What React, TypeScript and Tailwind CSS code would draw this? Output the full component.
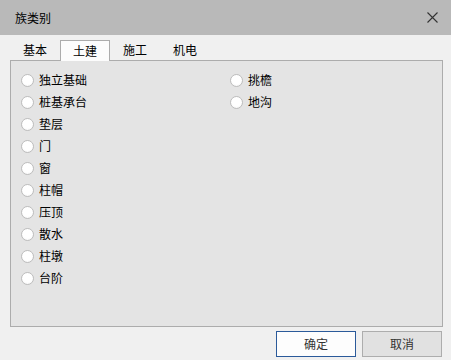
import { useState } from "react";

const leftItems = ["独立基础", "桩基承台", "垫层", "门", "窗", "柱帽", "压顶", "散水", "柱墩", "台阶"];
const rightItems = ["挑檐", "地沟"];
const tabs = ["基本", "土建", "施工", "机电"];

const font = { fontFamily: '"Noto Sans CJK SC", "Liberation Sans", sans-serif' };

function Radio({ label }: { label: string }) {
  return (
    <div className="flex h-[22px] items-center">
      <span className="h-[13px] w-[13px] rounded-full border border-[#bdbdbd] bg-[radial-gradient(circle_at_50%_40%,#ffffff_55%,#eeeeee_100%)]" />
      <span className="ml-[5px] text-[12px] leading-none text-black">{label}</span>
    </div>
  );
}

export default function App() {
  const [active, setActive] = useState(1);

  return (
    <div className="flex h-[360px] w-[451px] flex-col bg-[#f0f0f0]" style={font}>
      <div className="flex h-[35px] shrink-0 items-center justify-between bg-[#b9b9b9] pl-[15px] pr-[13px]">
        <span className="text-[12px] leading-none text-black">族类别</span>
        <svg width="11" height="11" viewBox="0 0 11 11">
          <path d="M0.5 0.5L10.5 10.5M10.5 0.5L0.5 10.5" stroke="#333" strokeWidth="1.1" />
        </svg>
      </div>

      <div className="flex flex-col pl-[10px] pr-[8px] pt-[5px]">
        <div className="relative z-10 -mb-px flex h-[21px]">
          {tabs.map((t, i) => (
            <button
              key={t}
              type="button"
              onClick={() => setActive(i)}
              className={`flex h-[21px] w-[50px] items-start justify-center pt-[4px] text-[12px] leading-none text-black ${
                i === active ? "border border-b-0 border-[#acacac] bg-[#fcfcfc]" : ""
              }`}
            >
              {t}
            </button>
          ))}
        </div>

        <div className="flex h-[267px] border border-[#acacac] bg-[#e4e4e4] pl-[10px] pt-[8px]">
          <div className="flex w-[209px] flex-col">
            {leftItems.map((l) => (
              <Radio key={l} label={l} />
            ))}
          </div>
          <div className="flex flex-col">
            {rightItems.map((l) => (
              <Radio key={l} label={l} />
            ))}
          </div>
        </div>

        <div className="mt-[4px] flex justify-end gap-[6px] pr-[1px]">
          <button
            type="button"
            className="h-[26px] w-[80px] border border-[#2b5a9a] bg-[#fdfdfd] text-[12px] text-[#333]"
          >
            确定
          </button>
          <button
            type="button"
            className="h-[26px] w-[80px] border border-[#adadad] bg-[#e1e1e1] text-[12px] text-[#333]"
          >
            取消
          </button>
        </div>
      </div>
    </div>
  );
}
